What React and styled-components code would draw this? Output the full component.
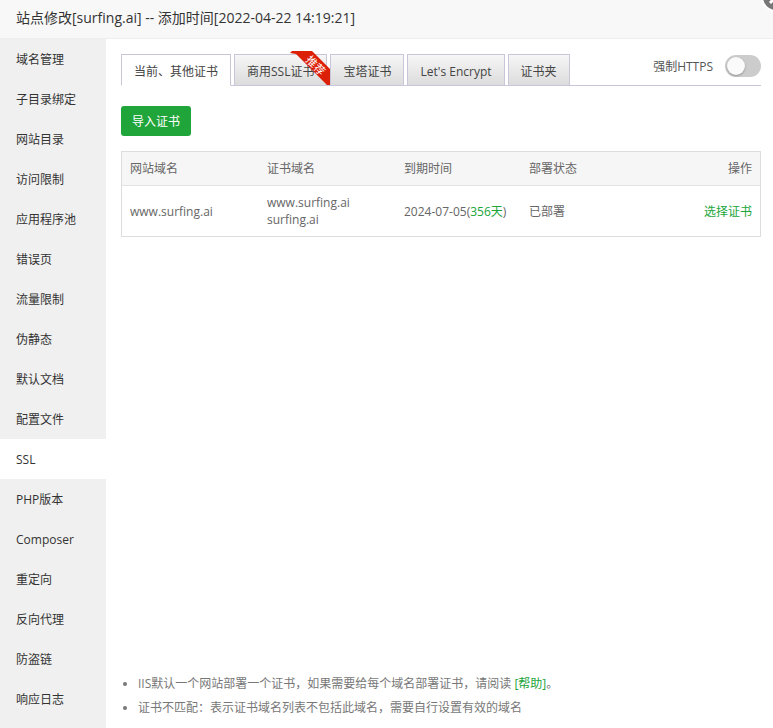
import { useState } from 'react';
import { styled, createGlobalStyle } from 'styled-components';

const menus = [
  '域名管理',
  '子目录绑定',
  '网站目录',
  '访问限制',
  '应用程序池',
  '错误页',
  '流量限制',
  '伪静态',
  '默认文档',
  '配置文件',
  'SSL',
  'PHP版本',
  'Composer',
  '重定向',
  '反向代理',
  '防盗链',
  '响应日志',
];

const tabs = [
  { name: '当前、其他证书' },
  { name: '商用SSL证书', recommend: true },
  { name: '宝塔证书' },
  { name: "Let's Encrypt" },
  { name: '证书夹' },
];

const certs = [
  {
    site: 'www.surfing.ai',
    domains: ['www.surfing.ai', 'surfing.ai'],
    expire: '2024-07-05',
    days: '356天',
    status: '已部署',
  },
];

const Ribbon = () => (
  <RibbonSvg viewBox='0 0 40 34' aria-hidden='true'>
    <path d='M0 2 L2 0 H22 L40 18 V34 H37 L6 3 Z' fill='#dc2008' />
    <text
      transform='translate(26 14) rotate(45)'
      textAnchor='middle'
      dominantBaseline='central'
      fontSize='11'
      fill='#fff'
    >
      推荐
    </text>
  </RibbonSvg>
);

const App = () => {
  const [menu, setMenu] = useState('SSL');
  const [tab, setTab] = useState(tabs[0].name);
  const [forceHttps, setForceHttps] = useState(false);

  return (
    <>
      <GlobalStyle />
      <Dialog>
        <TitleBar>
          <Title>站点修改[surfing.ai] -- 添加时间[2022-04-22 14:19:21]</Title>
          <CloseButton aria-label='关闭'>
            <svg width='30' height='30' viewBox='0 0 30 30'>
              <circle cx='15' cy='15' r='14' fill='#777' stroke='#fff' strokeWidth='2' />
              <path d='M9 9 L21 21 M21 9 L9 21' stroke='#fff' strokeWidth='3' />
            </svg>
          </CloseButton>
        </TitleBar>
        <Body>
          <Sidebar>
            {menus.map((name) => (
              <MenuItem key={name} $active={name === menu} onClick={() => setMenu(name)}>
                {name}
              </MenuItem>
            ))}
          </Sidebar>
          <Content>
            <TabBar>
              {tabs.map(({ name, recommend }) => (
                <Tab key={name} $active={name === tab} onClick={() => setTab(name)}>
                  {name}
                  {recommend && <Ribbon />}
                </Tab>
              ))}
              <TabRest>
                <SwitchLabel>
                  强制HTTPS
                  <Switch
                    type='checkbox'
                    role='switch'
                    checked={forceHttps}
                    onChange={(e) => setForceHttps(e.target.checked)}
                  />
                </SwitchLabel>
              </TabRest>
            </TabBar>
            <ImportButton>导入证书</ImportButton>
            <Table>
              <colgroup>
                <Col $width='137px' />
                <Col $width='137px' />
                <Col $width='125px' />
                <col />
                <col />
              </colgroup>
              <thead>
                <tr>
                  <Th>网站域名</Th>
                  <Th>证书域名</Th>
                  <Th>到期时间</Th>
                  <Th>部署状态</Th>
                  <Th $right>操作</Th>
                </tr>
              </thead>
              <tbody>
                {certs.map((cert) => (
                  <tr key={cert.site}>
                    <Td>{cert.site}</Td>
                    <Td>
                      {cert.domains.map((domain) => (
                        <div key={domain}>{domain}</div>
                      ))}
                    </Td>
                    <Td>
                      {cert.expire}(<Green>{cert.days}</Green>)
                    </Td>
                    <Td>{cert.status}</Td>
                    <Td $right>
                      <Link href='#cert'>选择证书</Link>
                    </Td>
                  </tr>
                ))}
              </tbody>
            </Table>
            <Tips>
              <li>
                IIS默认一个网站部署一个证书，如果需要给每个域名部署证书，请阅读{' '}
                <Link href='#help'>[帮助]</Link>。
              </li>
              <li>证书不匹配：表示证书域名列表不包括此域名，需要自行设置有效的域名</li>
            </Tips>
          </Content>
        </Body>
      </Dialog>
    </>
  );
};

export default App;

const GlobalStyle = createGlobalStyle`
  * {
    box-sizing: border-box;
  }

  body {
    margin: 0;
    background: white;
    color: #333;
    font-family: 'Open Sans', 'Noto Sans CJK SC', sans-serif;
    font-size: 12px;
    line-height: 17px;
  }

  button {
    font: inherit;
    color: inherit;
    cursor: pointer;
  }
`;

const Dialog = styled.div`
  display: flex;
  flex-direction: column;
  min-height: 100vh;
  overflow: hidden;
`;

const TitleBar = styled.header`
  position: relative;
  padding: 0 16px 2px;
  background: #f8f8f8;
  border-bottom: 1px solid #eee;
`;

const Title = styled.h1`
  margin: 0;
  font-size: 14px;
  font-weight: 400;
  line-height: 36px;
`;

/* Hangs over the corner of the dialog */
const CloseButton = styled.button`
  position: absolute;
  top: -18px;
  right: -18px;
  display: flex;
  padding: 0;
  border: none;
  background: none;
`;

const Body = styled.div`
  flex: 1;
  display: flex;
`;

const Sidebar = styled.nav`
  flex: none;
  display: flex;
  flex-direction: column;
  width: 106px;
  background: #f0f0f0;
`;

const MenuItem = styled.button`
  height: 40px;
  padding: 0 16px;
  border: none;
  background: ${({ $active }) => ($active ? 'white' : 'transparent')};
  text-align: left;
`;

const Content = styled.main`
  flex: 1;
  min-width: 0;
  display: flex;
  flex-direction: column;
  padding: 15px 12px 8px 15px;
`;

const TabBar = styled.div`
  display: flex;
  height: 32px;
`;

const Tab = styled.button`
  position: relative;
  flex: none;
  margin-right: 3px;
  padding: 2px 12px 0;
  border: 1px solid #c8c6d8;
  border-bottom-color: ${({ $active }) => ($active ? 'white' : '#c8c6d8')};
  background: ${({ $active }) =>
    $active ? 'white' : 'linear-gradient(#f6f6f6, #dcdcdc)'};
  color: #444;

  /* Carries the bottom line across the gap */
  &::after {
    content: '';
    position: absolute;
    right: -4px;
    bottom: -1px;
    width: 3px;
    height: 1px;
    background: #c8c6d8;
  }
`;

const RibbonSvg = styled.svg`
  position: absolute;
  z-index: 1;
  top: -4px;
  right: -4px;
  width: 40px;
  height: 34px;
  overflow: visible;
`;

const TabRest = styled.div`
  flex: 1;
  display: flex;
  justify-content: flex-end;
  border-bottom: 1px solid #c8c6d8;
`;

const SwitchLabel = styled.label`
  display: flex;
  align-items: center;
  gap: 12px;
  height: 24px;
  color: #555;
`;

const Switch = styled.input`
  appearance: none;
  width: 36px;
  height: 22px;
  margin: 0;
  padding: 2px;
  border-radius: 11px;
  background: ${({ checked }) => (checked ? '#20a53a' : '#ccc')};
  cursor: pointer;

  &::before {
    content: '';
    display: block;
    width: 18px;
    height: 18px;
    margin-left: ${({ checked }) => (checked ? '14px' : '0')};
    border-radius: 50%;
    background: #fafafa;
    box-shadow: 0 1px 2px rgb(0 0 0 / 30%);
  }
`;

const ImportButton = styled.button`
  align-self: flex-start;
  height: 30px;
  margin: 20px 0 15px;
  padding: 0 11px;
  border: none;
  border-radius: 3px;
  background: #20a53a;
  color: white;
`;

const Table = styled.table`
  width: 100%;
  border: 1px solid #ddd;
  border-collapse: separate;
  border-spacing: 0;
  table-layout: fixed;
  color: #666;
`;

const Col = styled.col`
  width: ${({ $width }) => $width};
`;

const Th = styled.th`
  height: 34px;
  padding: 0 8px;
  border-bottom: 1px solid #e3e3e3;
  background: #f6f6f6;
  font-weight: 400;
  text-align: ${({ $right }) => ($right ? 'right' : 'left')};
`;

const Td = styled.td`
  height: 50px;
  padding: 8px;
  white-space: nowrap;
  text-align: ${({ $right }) => ($right ? 'right' : 'left')};
`;

const Green = styled.span`
  color: #20a53a;
`;

const Link = styled.a`
  color: #20a53a;
  text-decoration: none;
`;

const Tips = styled.ul`
  margin: auto 0 0;
  padding-left: 17px;
  color: #777;
  line-height: 24px;
`;
